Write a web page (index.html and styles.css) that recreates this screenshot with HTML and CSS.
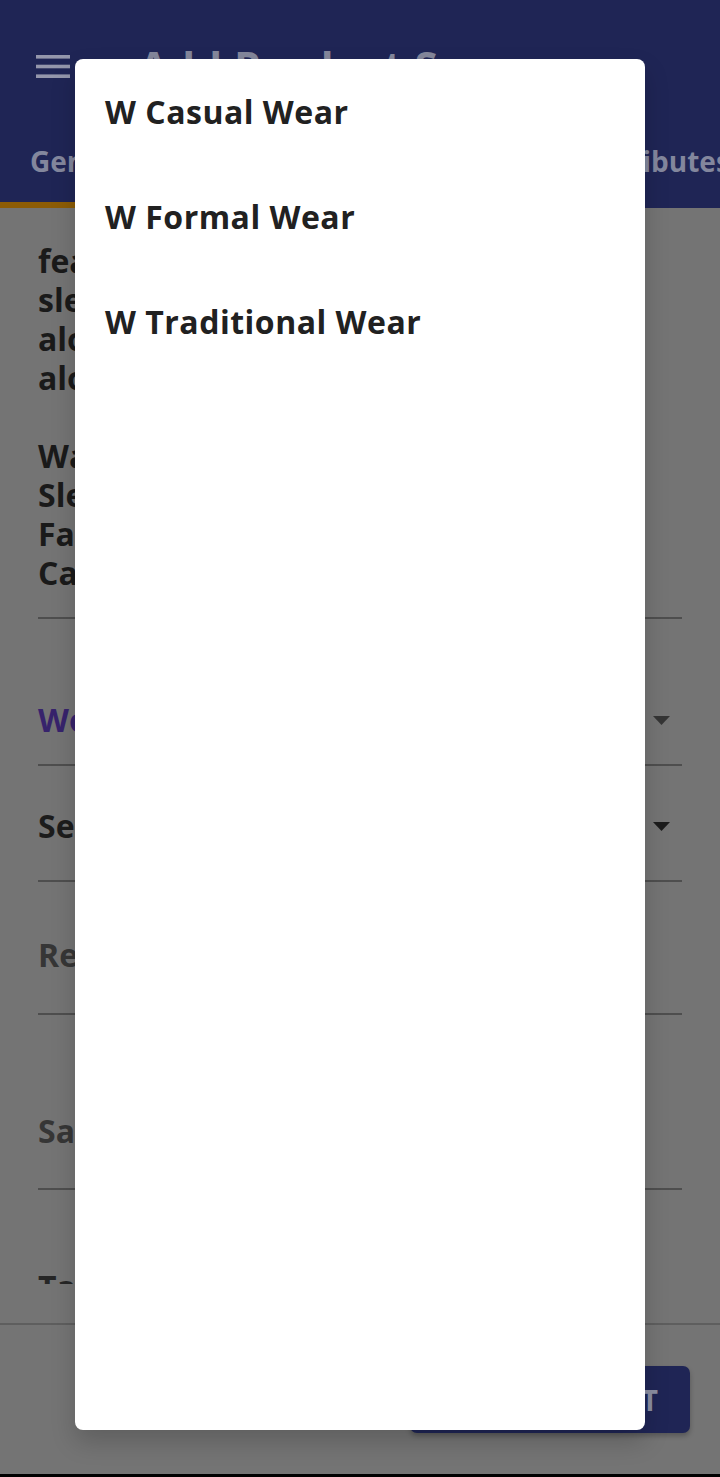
FILE: index.html
```html
<!DOCTYPE html>
<html lang="en">
<head>
<meta charset="utf-8">
<title>Add Product Screen</title>
<link rel="stylesheet" href="styles.css">
</head>
<body>
<div class="screen">
  <header class="appbar">
    <div class="toolbar">
      <svg class="menu" width="34" height="23" viewBox="0 0 34 23" aria-hidden="true">
        <rect x="0" y="0" width="34" height="3.6"/>
        <rect x="0" y="9.7" width="34" height="3.6"/>
        <rect x="0" y="19.4" width="34" height="3.6"/>
      </svg>
      <h1 class="title">Add Product Screen</h1>
    </div>
    <nav class="tabs">
      <div class="tab active">General</div>
      <div class="tab">Pricing &amp; Inventory</div>
      <div class="tab">Attributes</div>
    </nav>
  </header>

  <main class="form">
    <div class="field desc">
      <p class="desc-text">features a round neck and
sleeves with fine detailing
along the yoke, side slits
along the hem.

Wash Care: Hand wash
Sleeve: Three-quarter
Fabric: Cotton blend
Care: Do not bleach</p>
    </div>
    <div class="field select cat">
      <span class="value accent">Women's Wear</span>
      <svg class="arrow" width="17" height="9" viewBox="0 0 17 9" aria-hidden="true"><polygon points="0,0 17,0 8.5,9"/></svg>
    </div>
    <div class="field select sub">
      <span class="value">Select Sub Category</span>
      <svg class="arrow dark" width="17" height="9" viewBox="0 0 17 9" aria-hidden="true"><polygon points="0,0 17,0 8.5,9"/></svg>
    </div>
    <div class="field regular">
      <span class="value hint">Regular Price</span>
    </div>
    <div class="field sale">
      <span class="value hint">Sale Price</span>
    </div>
    <div class="field tags">
      <span class="value">Tags</span>
    </div>
  </main>

  <footer class="actions">
    <button class="submit" type="button">ADD PRODUCT</button>
  </footer>
  <div class="navbar"></div>
</div>

<div class="dialog" role="dialog">
  <div class="option">W Casual Wear</div>
  <div class="option">W Formal Wear</div>
  <div class="option">W Traditional Wear</div>
</div>
</body>
</html>
```

FILE: styles.css
```css
html, body {
  margin: 0;
  padding: 0;
}

body {
  width: 720px;
  height: 1477px;
  overflow: hidden;
  position: relative;
  background: #747474;
  font-family: "Open Sans", "Liberation Sans", sans-serif;
}

.screen {
  display: flex;
  flex-direction: column;
  height: 1477px;
}

/* App bar */
.appbar {
  flex: none;
  height: 208px;
  background: #1f2555;
  display: flex;
  flex-direction: column;
}

.toolbar {
  height: 130px;
  display: flex;
  align-items: center;
  padding-left: 36px;
  gap: 69px;
}

.menu {
  flex: none;
  margin-top: 2px;
  fill: #9497ac;
}

.title {
  margin: 2px 0 0;
  font-size: 42px;
  line-height: 48px;
  font-weight: 700;
  letter-spacing: 0.5px;
  color: #84879b;
  white-space: nowrap;
}

.tabs {
  height: 78px;
  display: flex;
  gap: 74px;
  overflow: hidden;
  white-space: nowrap;
}

.tab {
  flex: none;
  box-sizing: border-box;
  height: 78px;
  padding-top: 11px;
  font-size: 28px;
  line-height: 40px;
  font-weight: 700;
  color: #83879d;
}

.tab.active {
  padding-left: 30px;
  padding-right: 30px;
  border-bottom: 6px solid #8c5c06;
}

/* Form */
.form {
  flex: none;
  height: 1076px;
  overflow: hidden;
  box-sizing: border-box;
  padding: 0 38px;
  display: flex;
  flex-direction: column;
}

.field {
  flex: none;
  display: flex;
  align-items: center;
  justify-content: space-between;
  border-bottom: 2px solid #4e4e4e;
  font-size: 32px;
  line-height: 40px;
  font-weight: 700;
  color: #1c1c1c;
  white-space: nowrap;
}

.desc {
  padding: 33px 0 25px;
}

.desc-text {
  margin: 0;
  white-space: pre-line;
  line-height: 39px;
  color: #1a1a1a;
}

.cat { padding: 81px 12px 24px 0; }
.sub { padding: 40px 12px 34px 0; }
.regular { padding: 53px 0 38px; }
.sale { padding: 96px 0 37px; }
.tags { padding: 77px 0 30px; color: #262626; }

.value.accent { color: #37236c; }
.value.hint { color: #363636; }

.arrow { flex: none; fill: #353535; }
.arrow.dark { fill: #1c1c1c; }

/* Footer actions */
.actions {
  flex: 1;
  margin-top: 39px;
  border-top: 2px solid #5e5e5e;
  padding: 41px 30px 0;
  display: flex;
  justify-content: flex-end;
  align-items: flex-start;
}

.submit {
  width: 280px;
  height: 67px;
  border: none;
  border-radius: 7px;
  background: #1f2555;
  color: #8c8fa2;
  font-family: inherit;
  font-size: 28px;
  font-weight: 700;
  letter-spacing: 1.5px;
  box-shadow: 0 3px 5px rgba(0, 0, 0, 0.25);
}

.navbar {
  flex: none;
  height: 3px;
  background: #000;
}

/* Dialog */
.dialog {
  position: absolute;
  left: 75px;
  top: 59px;
  width: 570px;
  height: 1371px;
  background: #fff;
  border-radius: 8px;
  box-shadow: 0 12px 24px rgba(0, 0, 0, 0.18);
}

.option {
  height: 105px;
  display: flex;
  align-items: center;
  padding-left: 30px;
  font-size: 32px;
  font-weight: 700;
  letter-spacing: 0.5px;
  color: #212121;
}
```
